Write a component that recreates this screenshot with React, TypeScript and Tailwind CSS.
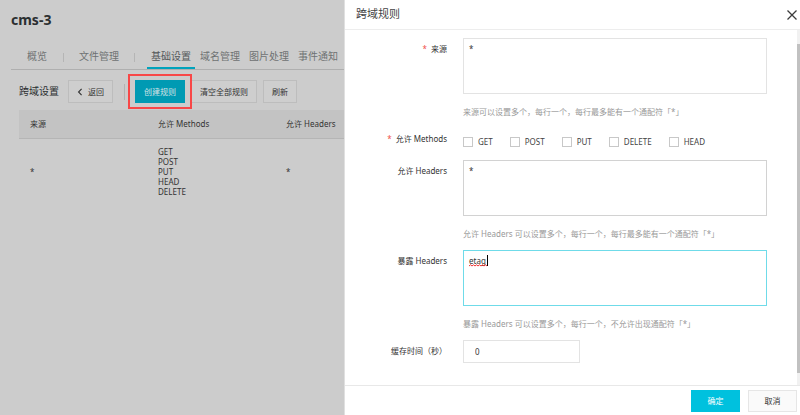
import { useState } from 'react';
import type { ReactNode } from 'react';

const TABS = ['基础设置', '域名管理', '图片处理', '事件通知'];
const METHODS = ['GET', 'POST', 'PUT', 'DELETE', 'HEAD'];

const RULES = [{ origin: '*', methods: ['GET', 'POST', 'PUT', 'HEAD', 'DELETE'], headers: '*' }];

function BucketTabs() {
  return (
    <nav className="mt-4 ml-[11px] flex h-[24px] items-stretch border-b border-[#afafaf] text-[10px] leading-[20px] whitespace-nowrap text-[#6f7273]">
      <a href="#overview" className="px-4">
        概览
      </a>
      <span className="my-[7px] w-px shrink-0 bg-[#b5b5b5]" />
      <a href="#files" className="px-[15px]">
        文件管理
      </a>
      <span className="my-[7px] mr-3 w-px shrink-0 bg-[#b5b5b5]" />
      {TABS.map((tab, i) => (
        <a
          key={tab}
          href={`#tab-${i}`}
          className={i === 0 ? 'mr-px border-b-2 border-[#00a3bc] px-1 text-[#55595b]' : 'mr-px px-1'}
        >
          {tab}
        </a>
      ))}
    </nav>
  );
}

function ToolButton({ children }: { children: ReactNode }) {
  return (
    <button
      type="button"
      className="flex h-[23px] shrink-0 items-center gap-[5px] border border-[#bdbdbd] bg-[#cecece] px-2 text-[#333]"
    >
      {children}
    </button>
  );
}

function Toolbar() {
  return (
    <div className="mt-[10px] ml-[19px] flex items-center text-[8px] whitespace-nowrap">
      <h2 className="mr-[9px] shrink-0 text-[10px] text-[#2b2f31]">跨域设置</h2>
      <ToolButton>
        <svg viewBox="0 0 6 10" className="h-[8px] w-[6px]" fill="none" stroke="#333" strokeWidth="1.4">
          <path d="M5 1 1.2 5 5 9" />
        </svg>
        返回
      </ToolButton>
      <span className="mr-[10px] ml-[11px] h-4 w-px shrink-0 bg-[#b3b3b3]" />
      <div className="relative mr-[6px] shrink-0">
        <button type="button" className="flex h-[23px] items-center bg-[#009ab3] px-[9px] text-[#d5e3e6]">
          创建规则
        </button>
        <span className="pointer-events-none absolute -inset-x-[7px] -inset-y-[6px] border-2 border-[#f84747]" />
      </div>
      <div className="flex gap-[6px]">
        <ToolButton>清空全部规则</ToolButton>
        <ToolButton>刷新</ToolButton>
      </div>
    </div>
  );
}

function RuleTable() {
  return (
    <div className="mt-[7px] pl-[19px]">
      <table className="w-full table-fixed text-left text-[8px] leading-[10px] whitespace-nowrap text-[#333]">
        <thead>
          <tr className="h-7 border-b border-[#b5b5b5] bg-[#c3c3c3]">
            <th className="w-32 pl-[11px] font-normal">来源</th>
            <th className="w-32 pl-[11px] font-normal">允许 Methods</th>
            <th className="pl-[11px] font-normal">允许 Headers</th>
          </tr>
        </thead>
        <tbody>
          {RULES.map((rule, i) => (
            <tr key={i}>
              <td className="pl-[11px]">{rule.origin}</td>
              <td className="py-2 pl-[11px]">
                {rule.methods.map((method) => (
                  <div key={method}>{method}</div>
                ))}
              </td>
              <td className="pl-[11px]">{rule.headers}</td>
            </tr>
          ))}
        </tbody>
      </table>
    </div>
  );
}

interface FieldProps {
  label: string;
  htmlFor?: string;
  required?: boolean;
  hint?: string;
  children: ReactNode;
}

function Field({ label, htmlFor, required, hint, children }: FieldProps) {
  return (
    <div className="flex gap-4">
      <label htmlFor={htmlFor} className="w-[102px] shrink-0 pt-[5px] text-right leading-3 text-[#333]">
        {required && <span className="mr-1 text-[#f0504c]">*</span>}
        {label}
      </label>
      <div className="min-w-0 flex-1">
        {children}
        {hint && <p className="mt-3 leading-3 whitespace-nowrap text-[#999]">{hint}</p>}
      </div>
    </div>
  );
}

function CorsDrawer() {
  const [origin, setOrigin] = useState('*');
  const [allowHeaders, setAllowHeaders] = useState('*');
  const [exposeHeaders, setExposeHeaders] = useState('etag');
  const [maxAge, setMaxAge] = useState('0');

  return (
    <aside className="flex w-[57%] shrink-0 flex-col border-l border-[#e0e0e0] bg-white text-[8px]">
      <header className="flex h-[30px] items-center justify-between border-b border-[#ededed] pr-[2px] pl-[11px]">
        <h2 className="text-[11px] text-[#444]">跨域规则</h2>
        <button type="button" aria-label="关闭" className="p-px">
          <svg viewBox="0 0 10 10" className="h-[10px] w-[10px]" fill="none" stroke="#3c3c3c" strokeWidth="1.3">
            <path d="M.5.5 9.5 9.5M9.5.5.5 9.5" />
          </svg>
        </button>
      </header>

      <div className="flex flex-1">
        <form className="flex min-w-0 flex-1 flex-col gap-[10px] pt-2 pr-[30px] pb-[22px]">
          <Field label="来源" htmlFor="origin" required hint="来源可以设置多个，每行一个，每行最多能有一个通配符「*」">
            <textarea
              id="origin"
              value={origin}
              onChange={(e) => setOrigin(e.target.value)}
              className="block h-14 w-full resize-none border border-[#e3e3e3] px-[5px] py-1 leading-3 text-[#333] outline-none"
            />
          </Field>
          <Field label="允许 Methods" required>
            <div className="flex h-[22px] gap-[17px] pt-2 leading-3 text-[#444]">
              {METHODS.map((method) => (
                <label key={method} className="flex h-3 items-center gap-[5px]">
                  <input type="checkbox" className="h-[10px] w-[10px] appearance-none border border-[#c8c8c8] bg-white checked:bg-[#00c1de]" />
                  {method}
                </label>
              ))}
            </div>
          </Field>
          <Field label="允许 Headers" htmlFor="allow-headers" hint="允许 Headers 可以设置多个，每行一个，每行最多能有一个通配符「*」">
            <textarea
              id="allow-headers"
              value={allowHeaders}
              onChange={(e) => setAllowHeaders(e.target.value)}
              className="block h-14 w-full resize-none border border-[#d2d2d2] px-[5px] py-1 leading-3 text-[#333] outline-none"
            />
          </Field>
          <Field label="暴露 Headers" htmlFor="expose-headers" hint="暴露 Headers 可以设置多个，每行一个，不允许出现通配符「*」">
            <div className="relative">
              <textarea
                id="expose-headers"
                value={exposeHeaders}
                onChange={(e) => setExposeHeaders(e.target.value)}
                className="block h-14 w-full resize-none border border-[#6fdbe9] px-[5px] py-1 leading-3 text-[#333] outline-none"
              />
              {/* spelling mark and text cursor */}
              <svg viewBox="0 0 18 3" className="absolute top-[14px] left-[6px] h-[3px] w-[18px]" fill="none" stroke="#f03030">
                <path d="M0 2 1.5.8 3 2 4.5.8 6 2 7.5.8 9 2 10.5.8 12 2 13.5.8 15 2 16.5.8 18 2" />
              </svg>
              <span className="absolute top-[5px] left-6 h-[11px] w-px bg-black" />
            </div>
          </Field>
          <Field label="缓存时间（秒）" htmlFor="max-age">
            <input
              id="max-age"
              type="text"
              value={maxAge}
              onChange={(e) => setMaxAge(e.target.value)}
              className="block h-[23px] w-[117px] border border-[#e3e3e3] px-[11px] text-[#333] outline-none"
            />
          </Field>
        </form>
        <div className="w-[3px] shrink-0 bg-[#f1f1f1] pt-[14px] pb-3">
          <div className="h-full bg-[#c1c1c1]" />
        </div>
      </div>

      <footer className="flex h-[30px] items-center justify-end gap-2 border-t border-[#e8e8e8] pr-[3px]">
        <button type="button" className="h-[22px] w-[49px] bg-[#00c1de] text-white">
          确定
        </button>
        <button type="button" className="h-[22px] w-[49px] border border-[#e6e6e6] bg-[#fafafa] text-[#333]">
          取消
        </button>
      </footer>
    </aside>
  );
}

export default function App() {
  return (
    <div className="flex min-h-screen bg-[#ccc] font-['Noto_Sans','Noto_Sans_CJK_SC',sans-serif]">
      <main className="min-w-0 flex-1 overflow-hidden">
        <h1 className="mt-[10px] ml-[11px] text-[14px] leading-5 font-bold text-[#2b2f31]">cms-3</h1>
        <BucketTabs />
        <Toolbar />
        <RuleTable />
      </main>
      <CorsDrawer />
    </div>
  );
}
